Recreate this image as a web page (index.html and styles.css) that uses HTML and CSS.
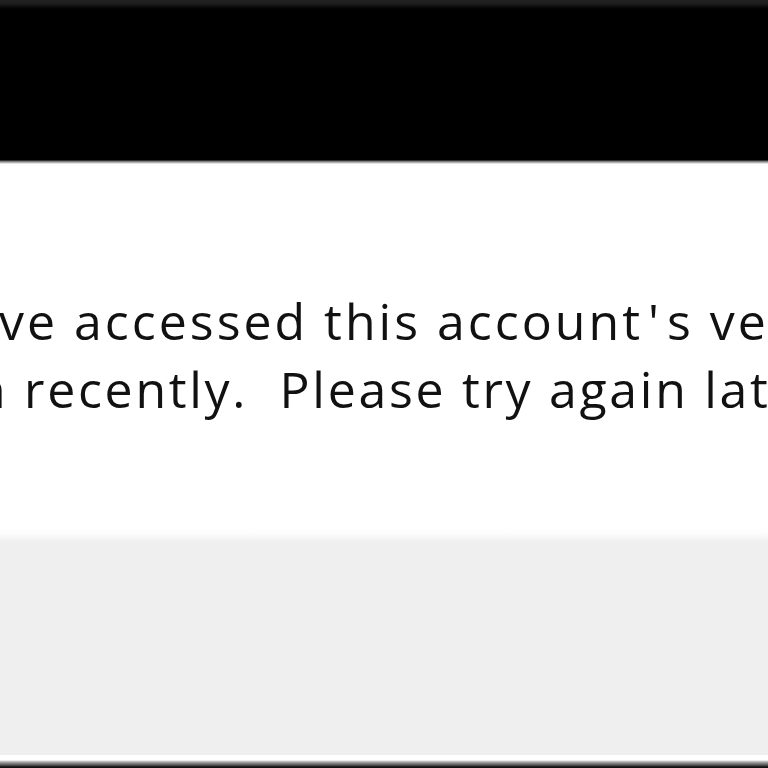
FILE: index.html
```html
<!DOCTYPE html>
<html lang="en">
<head>
<meta charset="utf-8">
<title>Dialog</title>
<link rel="stylesheet" href="styles.css">
</head>
<body>
<div class="dialog">
  <div class="titlebar"></div>
  <div class="content">
    <p class="line line-one">ve accessed this account<span class="apos">'</span>s verification code too</p>
    <p class="line line-two">n recently.  Please try again later.</p>
  </div>
  <div class="footer"></div>
  <div class="frame-bottom"></div>
</div>
</body>
</html>
```
FILE: styles.css
```css
html, body {
  margin: 0;
  padding: 0;
  width: 768px;
  height: 768px;
  overflow: hidden;
  background: #000;
}

.dialog {
  display: flex;
  flex-direction: column;
  width: 768px;
  height: 768px;
}

.titlebar {
  height: 164px;
  flex: none;
  background: linear-gradient(to bottom,
    #222 0px, #1c1c1c 4px, #050505 8px, #000 10px,
    #000 160px, #666 161px, #c8c8c8 163px, #fff 164px);
}

.content {
  height: 378px;
  flex: none;
  background: linear-gradient(to bottom, #fff 0, #fff 362px, #fcfcfc 370px, #f2f2f2 376px, #efefef 378px);
  padding-top: 123px;
  box-sizing: border-box;
  overflow: hidden;
}

.line {
  margin: 0;
  font-family: "Open Sans", "Noto Sans", sans-serif;
  font-size: 50px;
  font-weight: 500;
  line-height: 68px;
  letter-spacing: 3px;
  color: #111;
  white-space: pre;
  filter: blur(0.7px);
}

.line-one {
  margin-left: -1px;
}

.apos {
  margin: 0 5px;
}

.line-two {
  margin-left: -25px;
  letter-spacing: 2.7px;
}

.footer {
  height: 213px;
  flex: none;
  background: #efefef;
}

.frame-bottom {
  flex: 1;
  background: linear-gradient(to bottom, #fff 0, #fff 5px, #aaa 7px, #555 10px, #111 12px);
}
```
